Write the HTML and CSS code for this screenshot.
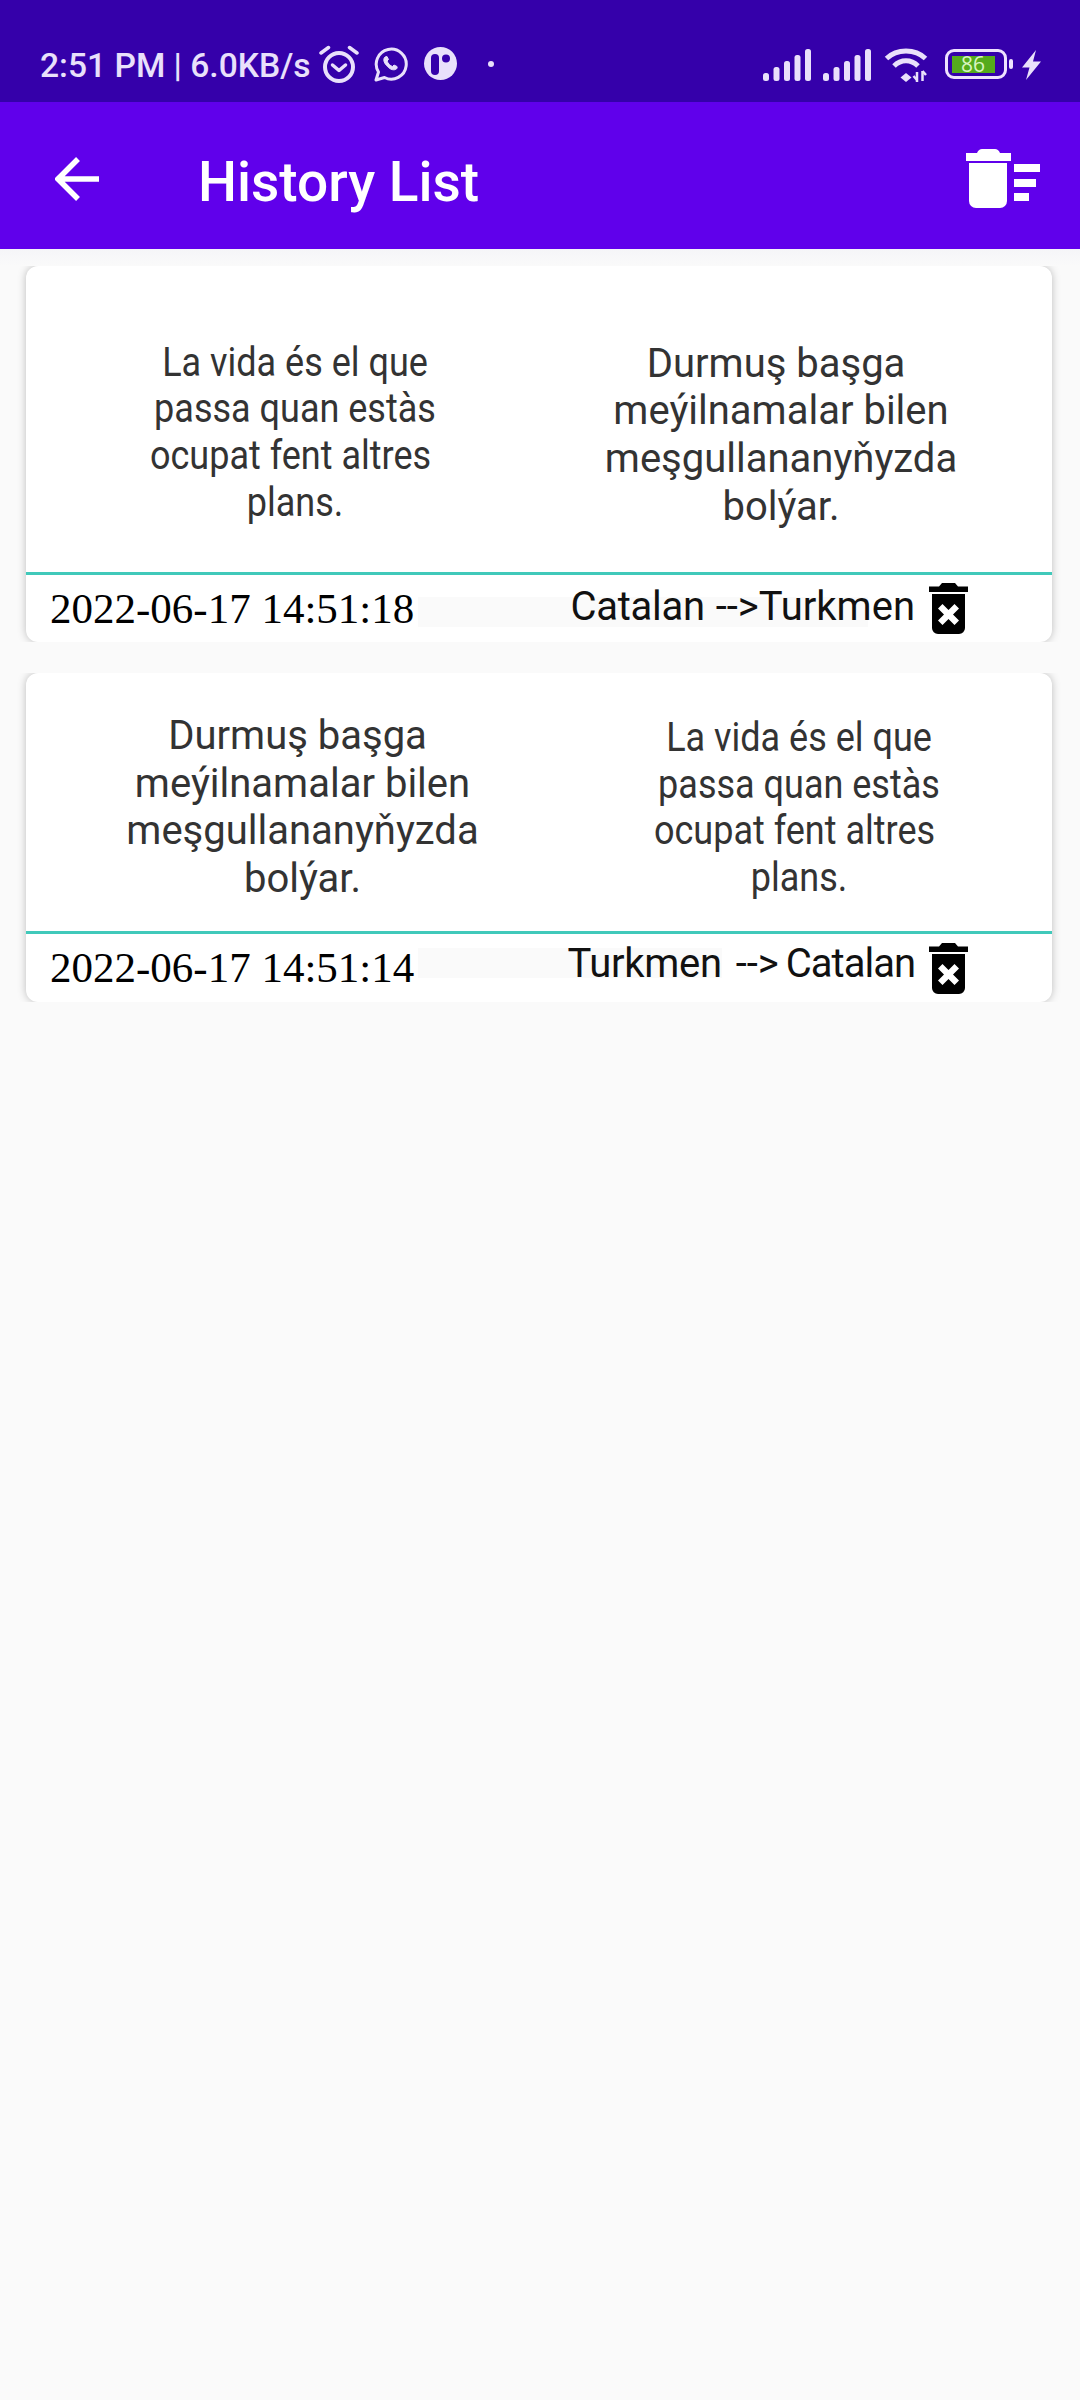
FILE: index.html
```html
<!DOCTYPE html>
<html lang="en">
<head>
    <meta charset="UTF-8">
    <meta name="viewport" content="width=device-width, initial-scale=1.0">
    <title>History List</title>
    <link rel="stylesheet" href="styles.css">
</head>
<body>
    <div class="status-bar">
        <span class="status-text">2:51 PM | 6.0KB/s</span>
        <svg class="ic-alarm" width="40" height="38" viewBox="0 0 40 38" fill="none" stroke="#e9e0fb">
            <circle cx="20" cy="22" r="14" stroke-width="4"/>
            <path d="M13.5 20l6.5 5.500 6.500-5.500" stroke-width="3.5" stroke-linecap="round" stroke-linejoin="round"/>
            <path d="M2 8l7.500-5.500M38 8l-7.500-5.500" stroke-width="3.5" stroke-linecap="round"/>
        </svg>
        <svg class="ic-whatsapp" width="34" height="35" viewBox="0 0 34 35" fill="none" stroke="#e9e0fb">
            <path d="M2 33l2.500-8A15 15 0 1 1 10.500 30.500z" stroke-width="3" stroke-linejoin="round"/>
            <path d="M11 10c-2 2-1.500 5 1.500 8.500s6 5 9 4c1.500-.5 2-2 1.500-3l-3-1.500-1.500 1.500c-2-.5-4.500-3-5.500-5.500l1.500-1.500-1.500-3z" fill="#e9e0fb" stroke-width="1"/>
        </svg>
        <svg class="ic-app" width="33" height="33" viewBox="0 0 33 33">
            <circle cx="16.5" cy="16.5" r="16.5" fill="#e9e0fb"/>
            <rect x="7" y="7" width="8" height="21" rx="4" fill="#3500aa"/>
            <circle cx="22" cy="11.5" r="4" fill="#3500aa"/>
        </svg>
        <span class="status-dot"></span>
        <span class="status-spacer"></span>
        <svg class="ic-signal" width="48" height="32" viewBox="0 0 48 32" fill="#e9e0fb">
            <rect x="0" y="24" width="6" height="8" rx="2.5"/>
            <rect x="10.5" y="18" width="6" height="14" rx="2.5"/>
            <rect x="21" y="12" width="6" height="20" rx="2.5"/>
            <rect x="31.5" y="6" width="6" height="26" rx="2.5"/>
            <rect x="42" y="0" width="6" height="32" rx="2.5"/>
        </svg>
        <svg class="ic-signal2" width="48" height="32" viewBox="0 0 48 32" fill="#e9e0fb">
            <rect x="0" y="24" width="6" height="8" rx="2.5"/>
            <rect x="10.5" y="18" width="6" height="14" rx="2.5"/>
            <rect x="21" y="12" width="6" height="20" rx="2.5"/>
            <rect x="31.5" y="6" width="6" height="26" rx="2.5"/>
            <rect x="42" y="0" width="6" height="32" rx="2.5"/>
        </svg>
        <svg class="ic-wifi" width="46" height="36" viewBox="0 0 46 36" fill="none" stroke="#e9e0fb" stroke-width="5">
            <path d="M2.500 11.500C13 1.500 31 1.500 41.500 11.500"/>
            <path d="M10 19c7-7 17-7 24 0"/>
            <path d="M22 26l5.500 4.500-5.500 4.500-5.500-4.500z" fill="#e9e0fb" stroke="none"/>
            <path d="M33 25v10M38.500 24v10" stroke-width="2.5"/>
            <path d="M29.500 29l3.500 4M42 28l-3.500-4" stroke-width="2.5"/>
        </svg>
        <div class="battery">
            <span class="battery-fill">86</span>
        </div>
        <span class="battery-tip"></span>
        <svg class="ic-bolt" width="19" height="30" viewBox="0 0 19 30" fill="#e9e0fb">
            <path d="M14 0L0 17.500h7.500L4 30 19 11.500h-8z"/>
        </svg>
    </div>

    <div class="app-bar">
        <svg class="ic-back" width="44" height="44" viewBox="0 0 44 44" fill="none" stroke="#fff" stroke-width="5.5">
            <path d="M23 2L3 22l20 20M3 22h41"/>
        </svg>
        <span class="app-title">History List</span>
        <svg class="ic-clear" width="74" height="59" viewBox="0 0 74 59" fill="#fff">
            <path d="M0 4h11c1-2.500 3-4 5-4h13c2 0 4 1.500 5 4h11v8H0z"/>
            <path d="M3 14h38v38a7 7 0 0 1-7 7H10a7 7 0 0 1-7-7z"/>
            <rect x="48" y="15" width="26" height="8"/>
            <rect x="48" y="30" width="22" height="8"/>
            <rect x="48" y="44" width="15" height="8"/>
        </svg>
    </div>

    <div class="history-list">
        <div class="card card-first">
            <div class="phrases">
                <div class="phrase phrase-narrow">La vida és el que<br>passa quan estàs<br>ocupat fent altres&nbsp;<br>plans.</div>
                <div class="phrase phrase-wide">Durmuş başga&nbsp;<br>meýilnamalar bilen<br>meşgullananyňyzda<br>bolýar.</div>
            </div>
            <div class="meta">
                <span class="strip"></span>
                <span class="date">2022-06-17 14:51:18</span>
                <div class="langs">
                    <span class="lang-a">Catalan</span>
                    <span class="arrow">--&gt;</span>
                    <span class="lang-b">Turkmen</span>
                </div>
                <svg class="ic-del" width="39" height="51" viewBox="0 0 39 51">
                    <path d="M0 3.500h10L13 0h13l3 3.500h10V9H0z"/>
                    <path fill-rule="evenodd" d="M3 11h33v34a6 6 0 0 1-6 6H9a6 6 0 0 1-6-6zM19.500 27l-6-6L9 25.500l6 6-6 6 4.500 4.500 6-6 6 6 4.500-4.500-6-6 6-6-4.500-4.500z"/>
                </svg>
            </div>
        </div>

        <div class="card card-second">
            <div class="phrases">
                <div class="phrase phrase-wide">Durmuş başga&nbsp;<br>meýilnamalar bilen<br>meşgullananyňyzda<br>bolýar.</div>
                <div class="phrase phrase-narrow">La vida és el que<br>passa quan estàs<br>ocupat fent altres&nbsp;<br>plans.</div>
            </div>
            <div class="meta">
                <span class="strip"></span>
                <span class="date">2022-06-17 14:51:14</span>
                <div class="langs">
                    <span class="lang-a">Turkmen</span>
                    <span class="arrow">--&gt;</span>
                    <span class="lang-b">Catalan</span>
                </div>
                <svg class="ic-del" width="39" height="51" viewBox="0 0 39 51">
                    <path d="M0 3.500h10L13 0h13l3 3.500h10V9H0z"/>
                    <path fill-rule="evenodd" d="M3 11h33v34a6 6 0 0 1-6 6H9a6 6 0 0 1-6-6zM19.500 27l-6-6L9 25.500l6 6-6 6 4.500 4.500 6-6 6 6 4.500-4.500-6-6 6-6-4.500-4.500z"/>
                </svg>
            </div>
        </div>
    </div>
</body>
</html>
```

FILE: styles.css
```css
body {
    margin: 0;
    height: 2400px;
    overflow: hidden;
    background: #fafafa;
    font-family: Roboto, sans-serif;
}

/* status bar */
.status-bar {
    height: 102px;
    padding-left: 40px;
    display: flex;
    align-items: flex-start;
    background: #3500aa;
    color: #e9e0fb;
}
.status-text {
    margin-top: 45px;
    font-size: 33.6px;
    font-weight: 500;
    line-height: 42px;
    white-space: nowrap;
}
.ic-alarm { margin: 45px 0 0 8px; }
.ic-whatsapp { margin: 47px 0 0 15px; }
.ic-app { margin: 47px 0 0 16px; }
.status-dot {
    width: 6px;
    height: 6px;
    margin: 61px 0 0 31px;
    border-radius: 50%;
    background: #e9e0fb;
}
.status-spacer { flex: 1; }
.ic-signal { margin-top: 49px; }
.ic-signal2 { margin: 49px 0 0 12px; }
.ic-wifi { margin: 47px 0 0 13px; }
.battery {
    width: 62px;
    height: 30px;
    margin: 49px 0 0 15px;
    box-sizing: border-box;
    padding: 3.5px 9.5px 3.5px 3.5px;
    border: 3.5px solid #efe2ff;
    border-radius: 9px;
}
.battery-fill {
    display: block;
    height: 100%;
    background: #55ab1c;
    color: #d8f5c0;
    font-family: "Open Sans", sans-serif;
    font-size: 21px;
    line-height: 16px;
    text-align: center;
}
.battery-tip {
    width: 4px;
    height: 10px;
    margin: 59px 0 0 2px;
    border-radius: 2px;
    background: #efe2ff;
}
.ic-bolt { margin: 50px 39px 0 9px; }

/* app bar */
.app-bar {
    height: 147px;
    display: flex;
    align-items: flex-start;
    background: #6000eb;
    color: #fff;
}
.ic-back { margin: 55px 0 0 55px; }
.app-title {
    margin: 50px 0 0 99px;
    font-size: 55px;
    font-weight: 500;
    line-height: 60px;
}
.ic-clear { margin: 47px 40px 0 auto; }

/* history cards */
.history-list {
    padding: 17px 28px 0 26px;
    background: linear-gradient(#f5f5f8, #fafafa 17px) no-repeat top / 100% 17px;
}
.card {
    margin-bottom: 31px;
    background: #fff;
    border-radius: 12px;
    box-shadow: 0 0 8px rgba(0,0,0,0.25);
    clip-path: inset(0 -10px);
}
.card-first { height: 376px; }
.card-second { height: 329px; }
.phrases {
    display: grid;
    box-sizing: border-box;
    border-bottom: 3px solid #40c9ba;
    color: #333;
    text-align: center;
}
.card-first .phrases {
    height: 309px;
    padding-top: 73.5px;
    grid-template-columns: 538px 434px;
}
.card-second .phrases {
    height: 261px;
    padding-top: 39px;
    grid-template-columns: 553px 440px;
}
.phrase {
    font-size: 40px;
    white-space: nowrap;
}
.phrase-wide { line-height: 47.7px; }
.phrase-narrow {
    line-height: 46.7px;
    transform: scaleX(0.9);
}
.card-second .phrase-narrow { margin-top: 3px; }

.meta {
    position: relative;
    height: 67px;
    display: flex;
    align-items: flex-start;
}
.strip {
    position: absolute;
    left: 392px;
    height: 30px;
    background: #fafafa;
}
.card-first .strip { top: 22px; width: 450px; }
.card-second .strip { top: 14px; width: 304px; }
.date {
    position: relative;
    margin: 10px 0 0 24px;
    font-family: "Liberation Serif", serif;
    font-size: 43px;
    line-height: 48px;
    color: #000;
    white-space: nowrap;
}
.langs {
    position: relative;
    margin-left: auto;
    display: flex;
    font-size: 40px;
    line-height: 44px;
    color: #111;
    white-space: nowrap;
}
.card-first .langs { margin-top: 10px; }
.card-second .langs { margin-top: 8px; }
.card-first .arrow { margin-left: 11px; }
.card-first .lang-a { letter-spacing: -0.3px; }
.card-second .lang-a { letter-spacing: -0.3px; }
.card-second .arrow { margin-left: 14px; }
.card-second .lang-b { margin-left: 7px; letter-spacing: -1px; }
.ic-del {
    position: relative;
    margin: 8px 84px 0 14px;
    fill: #000;
}
.card-second .ic-del { margin-top: 9px; }
```
